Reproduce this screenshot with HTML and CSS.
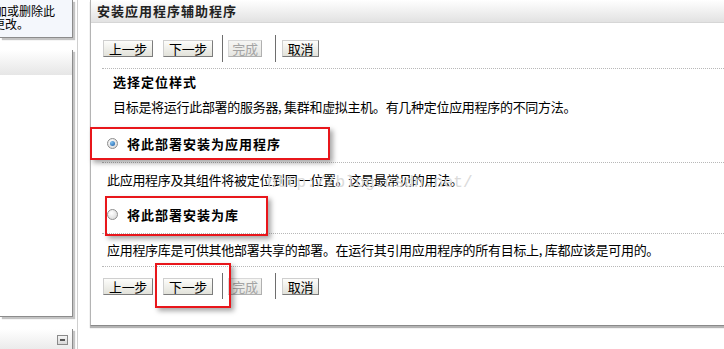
FILE: index.html
```html
<!DOCTYPE html>
<html lang="zh-CN">
<head>
<meta charset="utf-8">
<title>安装应用程序辅助程序</title>
<link rel="stylesheet" href="styles.css">
</head>
<body>
<div class="page">
  <div class="side">
    <div class="lp lp1">
      <div class="lp1-line l1">添加或删除此</div>
      <div class="lp1-line l2">的更改。</div>
    </div>
    <div class="lp lp2"><div class="lp-hdr"></div></div>
    <div class="lp lp3"><div class="lp-hdr lp-hdr-icon"><span class="minus"></span></div></div>
  </div>
  <div class="main">
    <div class="hdr">安装应用程序辅助程序</div>
    <div class="content">
      <div class="btnrow top">
        <button class="btn step first">上一步</button>
        <button class="btn step second">下一步</button>
        <span class="sep s1"></span>
        <button class="btn done" disabled>完成</button>
        <span class="sep s2"></span>
        <button class="btn cancel">取消</button>
      </div>
      <div class="rule r1"></div>
      <div class="stitle">选择定位样式</div>
      <div class="desc d1">目标是将运行此部署的服务器, 集群和虚拟主机。有几种定位应用程序的不同方法。</div>
      <div class="opt o1"><span class="radio on"><span class="dot"></span></span><span class="opt-label">将此部署安装为应用程序</span></div>
      <div class="rule r2"></div>
      <div class="desc d2">此应用程序及其组件将被定位到同一位置。这是最常见的用法。</div>
      <div class="opt o2"><span class="radio"></span><span class="opt-label">将此部署安装为库</span></div>
      <div class="rule r3"></div>
      <div class="desc d3">应用程序库是可供其他部署共享的部署。在运行其引用应用程序的所有目标上, 库都应该是可用的。</div>
      <div class="rule r4"></div>
      <div class="btnrow bottom">
        <button class="btn step first">上一步</button>
        <button class="btn step second">下一步</button>
        <span class="sep s1"></span>
        <button class="btn done" disabled>完成</button>
        <span class="sep s2"></span>
        <button class="btn cancel">取消</button>
      </div>
    </div>
  </div>
</div>
<div class="watermark">http://blog.csdn.net/</div>
<div class="mark m1"></div>
<div class="mark m2"></div>
<div class="mark m3"></div>
</body>
</html>
```
FILE: styles.css
```css
html, body {
  margin: 0;
  padding: 0;
}
body {
  width: 724px;
  height: 349px;
  overflow: hidden;
  position: relative;
  background: #fff;
  color: #000;
  font-family: "Noto Sans CJK SC", "Noto Sans", sans-serif;
  font-size: 13px;
  letter-spacing: -0.3px;
}
.page {
  display: flex;
  height: 349px;
}

/* left column */
.side {
  width: 77px;
  flex: none;
  border-right: 1px solid #cfcfcf;
  display: flex;
  flex-direction: column;
}
.lp {
  width: 72px;
  background: #fff;
  border-right: 1px solid #8c8c8c;
  border-bottom: 1px solid #8c8c8c;
  box-shadow: 2px 2px 1px #c4c4c4;
  overflow: hidden;
}
.lp1 {
  height: 33px;
  padding-top: 4px;
  background: #f4f7fc;
}
.lp1-line {
  line-height: 13px;
  white-space: nowrap;
  letter-spacing: 0;
  font-size: 12px;
}
.lp1-line.l1 { margin-left: -17px; }
.lp1-line.l2 { margin-left: -19px; }
.lp2 {
  margin-top: 12px;
  height: 266px;
}
.lp3 {
  margin-top: 12px;
  flex: 1;
  border-bottom: none;
}
.lp-hdr {
  height: 25px;
  background: linear-gradient(#ffffff, #e6e6e6);
}
.lp-hdr-icon {
  display: flex;
  justify-content: flex-end;
  align-items: flex-start;
  padding-top: 6px;
  padding-right: 4px;
  box-sizing: border-box;
}
.minus {
  width: 11px;
  height: 10px;
  box-sizing: border-box;
  border: 1px solid #8a8a8a;
  background: linear-gradient(#f4f4f4, #d8d8d8);
  position: relative;
}
.minus::after {
  content: "";
  position: absolute;
  left: 2px;
  right: 2px;
  top: 3px;
  height: 2px;
  background: #555;
}

/* main panel */
.main {
  margin-left: 12px;
  flex: 1;
  height: 325px;
  border-left: 1px solid #b4b4b4;
  border-bottom: 1px solid #8a8a8a;
  box-shadow: 0 2px 1px #b4b4b4;
}
.hdr {
  height: 22px;
  line-height: 22px;
  padding-left: 6px;
  background: linear-gradient(#ffffff, #e2e2e2);
  border-bottom: 1px solid #d6d6d6;
  font-weight: bold;
  letter-spacing: 1px;
  color: #222;
}
.content {
  padding-left: 11px;
}
.btnrow {
  display: flex;
  align-items: center;
}
.btnrow.top {
  margin-top: 12px;
  height: 27px;
}
.btnrow.bottom {
  margin-top: 6px;
  height: 26px;
}
.btn {
  height: 17px;
  box-sizing: border-box;
  padding: 0;
  margin: 0;
  border: 1px solid;
  border-color: #cfcfcf #7c7c7c #7c7c7c #cfcfcf;
  border-radius: 0;
  background: linear-gradient(#fdfdfb, #e2e2da);
  font-family: inherit;
  font-size: 13px;
  letter-spacing: -0.3px;
  line-height: 15px;
  color: #000;
  text-align: center;
}
.btn.step { width: 50px; }
.btn.first { margin-left: 1px; }
.btn.second { margin-left: 10px; }
.btn.done {
  width: 34px;
  margin-left: 5px;
  color: #a4a4a4;
  border-color: #d8d8d8 #b0b0b0 #b0b0b0 #d8d8d8;
  background: linear-gradient(#f6f6f4, #e6e6e2);
}
.btn.cancel {
  width: 37px;
  margin-left: 6px;
}
.sep {
  width: 1px;
  align-self: stretch;
  background: #6e6e6e;
}
.sep.s1 { margin-left: 9px; }
.sep.s2 { margin-left: 13px; }

.rule {
  height: 0;
  border-top: 1px dotted #b8b8b8;
}
.rule.r1 { margin-top: 6px; }
.rule.r2 { margin-top: 11px; }
.rule.r3 { margin-top: 11px; }
.rule.r4 { margin-top: 8px; }

.stitle {
  margin-top: 5px;
  padding-left: 11px;
  line-height: 16px;
  font-weight: bold;
  letter-spacing: 1px;
}
.desc {
  line-height: 16px;
  padding-left: 5px;
  white-space: nowrap;
}
.desc.d1 { margin-top: 9px; padding-left: 11px; }
.desc.d2 { margin-top: 9px; }
.desc.d3 { margin-top: 8px; }

.opt {
  height: 16px;
  display: flex;
  align-items: center;
  padding-left: 5px;
}
.opt.o1 { margin-top: 20px; }
.opt.o2 { margin-top: 18px; }
.opt-label {
  font-weight: bold;
  letter-spacing: 1px;
}
.radio {
  width: 11px;
  height: 11px;
  box-sizing: border-box;
  border-radius: 50%;
  border: 1px solid #8e8e8e;
  background: radial-gradient(circle at 40% 35%, #ffffff, #d2d2d2);
  margin-right: 9px;
  display: flex;
  align-items: center;
  justify-content: center;
  flex: none;
}
.radio .dot {
  width: 5px;
  height: 5px;
  border-radius: 50%;
  background: radial-gradient(circle at 35% 30%, #7fc0f0, #1a5ea8);
}

/* overlays */
.watermark {
  position: absolute;
  left: 267px;
  top: 173px;
  font-family: "Liberation Mono", monospace;
  font-size: 16px;
  letter-spacing: 0.2px;
  line-height: 20px;
  color: #dadada;
}
.mark {
  position: absolute;
  box-sizing: border-box;
  border: 2px solid #e8161b;
  box-shadow: 3px 3px 5px rgba(0, 0, 0, 0.35);
}
.mark.m1 { left: 90px; top: 127px; width: 240px; height: 33px; }
.mark.m2 { left: 105px; top: 196px; width: 163px; height: 40px; }
.mark.m3 { left: 155px; top: 263px; width: 76px; height: 45px; }
```
